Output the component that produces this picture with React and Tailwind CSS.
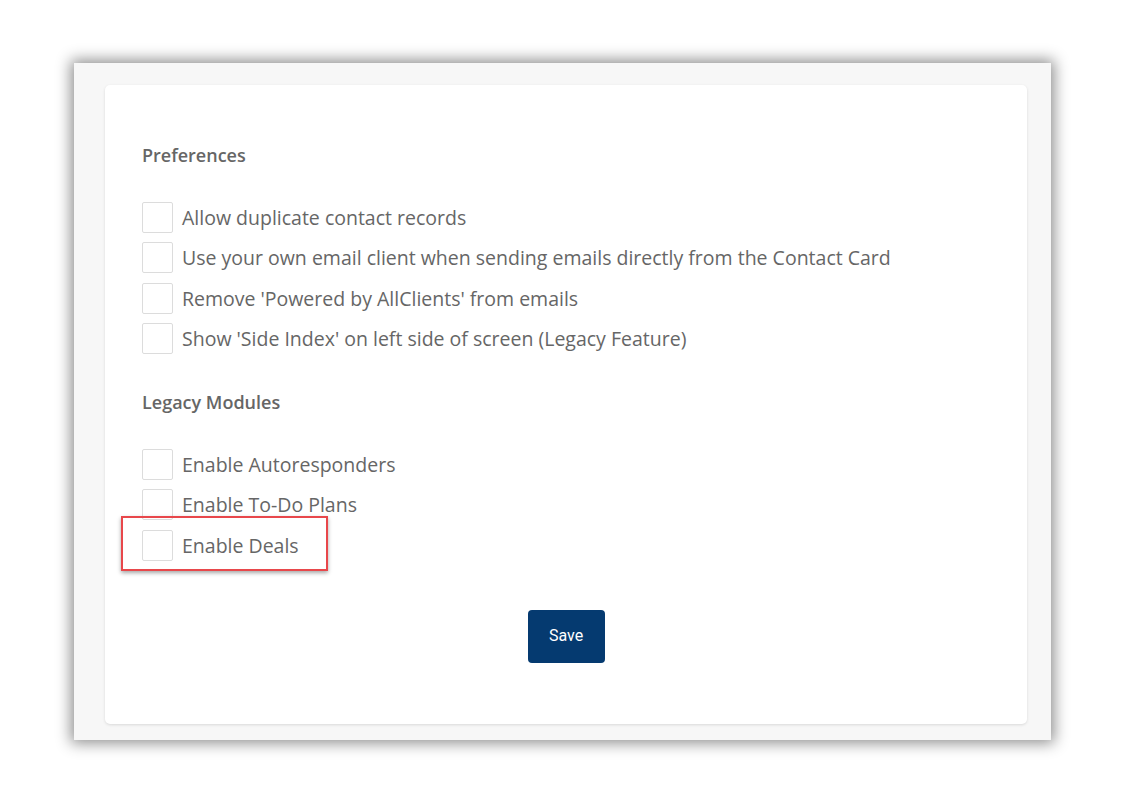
import React from 'react';

const prefs = [
  'Allow duplicate contact records',
  'Use your own email client when sending emails directly from the Contact Card',
  "Remove 'Powered by AllClients' from emails",
  "Show 'Side Index' on left side of screen (Legacy Feature)",
];

const legacy = ['Enable Autoresponders', 'Enable To-Do Plans', 'Enable Deals'];

function Row({ label, highlight }) {
  return (
    <div className="relative flex items-center h-[40.5px] gap-[9px]">
      <span className="w-[31px] h-[31px] border border-[#dcdcdc] rounded-[2px] bg-white shrink-0" />
      <span className="text-[19.5px] text-[#666]">{label}</span>
      {highlight && (
        <div className="absolute left-[-21px] top-[-9px] w-[207px] h-[55px] border-2 border-[#e8474b] shadow-[0_2px_4px_rgba(0,0,0,0.35)] pointer-events-none" />
      )}
    </div>
  );
}

export default function App() {
  return (
    <div className="w-[1125px] h-[794px] bg-white pt-[63px] pl-[74px] font-['Open_Sans',sans-serif]">
      <div className="w-[977px] h-[677px] bg-[#f7f7f7] shadow-[0_0_14px_3px_rgba(0,0,0,0.45)] pt-[22px] pl-[31px]">
        <div className="w-[922px] h-[639px] bg-white rounded-[5px] shadow-[0_1px_3px_rgba(0,0,0,0.12)] pl-[37px] pt-[56px]">
          <h2 className="text-[18px] font-semibold text-[#666] leading-[28px]">Preferences</h2>
          <div className="mt-[28px] flex flex-col">
            {prefs.map((p) => (
              <Row key={p} label={p} />
            ))}
          </div>
          <h2 className="mt-[29px] text-[18px] font-semibold text-[#666] leading-[28px]">Legacy Modules</h2>
          <div className="mt-[28px] flex flex-col">
            {legacy.map((p, i) => (
              <Row key={p} label={p} highlight={i === 2} />
            ))}
          </div>
          <div className="flex justify-center mt-[44px] pr-[37px]">
            <button className="w-[77px] h-[53px] bg-[#053a70] rounded-[4px] text-white text-[16px] font-['Roboto',sans-serif]">
              Save
            </button>
          </div>
        </div>
      </div>
    </div>
  );
}
